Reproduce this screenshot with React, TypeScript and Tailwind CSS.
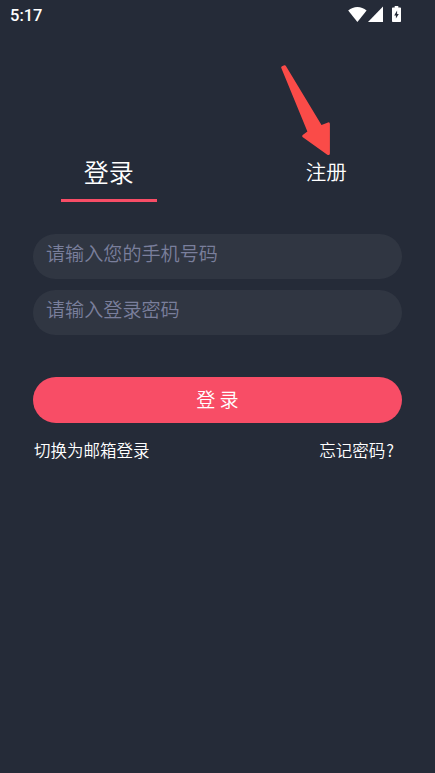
import type { ReactNode } from "react";
import { clsx } from "clsx";

interface TabProps {
  label: string;
  active?: boolean;
}

interface FieldProps {
  type: string;
  placeholder: string;
}

{/** Signal, wifi and battery glyphs on the right side of the status bar. */}
const StatusIcons = () => (
  <div className="flex h-[18px] items-start">
    <svg width="19" height="16" viewBox="0 0 19 16" fill="#fff">
      <path d="M9.4 15.9 0.2 4.5C2.9 2.1 6 0.9 9.4 0.9s6.5 1.2 9.2 3.6z" />
    </svg>
    <svg className="ml-px" width="15" height="16" viewBox="0 0 15 16" fill="#fff">
      <path d="M15 0.6V16H0z" />
    </svg>
    <svg className="ml-[9px]" width="9" height="16" viewBox="0 0 9 16">
      <path fill="#fff" d="M2.7 0h3.6v1.5H8.2q.8 0 .8.8V15.2q0 .8-.8.8H.8Q0 16 0 15.2V2.3q0-.8.8-.8h1.9z" />
      <path fill="#252b38" d="M5.1 4.6v3.5h1.7L3.9 12.6V9.5H2.2z" />
    </svg>
  </div>
);

{/** Pointer drawn over the page, aimed at the register tab. */}
const Arrow = () => (
  <svg className="absolute left-[270px] top-[55px]" width="70" height="105" viewBox="0 0 70 105">
    <path
      fill="#fa4b48"
      d="M11.2 12.8Q10.9 11.7 12 11.2L14.3 10.2Q15.4 9.9 15.9 10.9L51.5 69.9 58 67.4Q59.9 67 59.9 68.9V98.4Q59.7 100.8 57.3 99.8L32.5 81.9Q31.7 80.8 32.7 79.9L37.4 76.6z"
    />
  </svg>
);

const Tab = ({ label, active }: TabProps) => (
  <div className="flex flex-1 flex-col items-center">
    <button
      className={clsx(
        "flex h-9 items-center leading-none",
        active ? "text-[25px]" : "text-[20.5px]"
      )}
    >
      {label}
    </button>
    {active && <div className="mt-[10px] h-[3px] w-24 bg-[#f84d66]" />}
  </div>
);

const Field = ({ type, placeholder }: FieldProps) => (
  <input
    type={type}
    placeholder={placeholder}
    className="block h-[45.5px] w-full rounded-full bg-[#303642] px-[13px] pb-[6px] text-[19.1px] text-white outline-none placeholder:text-[#7a7f9c]"
  />
);

const TextLink = ({ children }: { children: ReactNode }) => (
  <button className="text-[16.5px] leading-6">{children}</button>
);

export default function App() {
  return (
    <main className="relative h-screen overflow-hidden bg-[#252b38] font-['Noto_Sans_CJK_SC',sans-serif] font-[350] text-white">

      {/** Status bar */}
      <header className="flex h-[30px] items-start justify-between pl-[10px] pr-[34px] pt-[6px]">
        <span className="font-[Roboto,sans-serif] text-[16.5px] font-medium leading-[19px]">5:17</span>
        <StatusIcons />
      </header>

      {/** Login / register switch */}
      <nav className="mt-[123px] flex h-[49px]">
        <Tab label="登录" active />
        <Tab label="注册" />
      </nav>

      {/** Login form */}
      <form className="mx-[33px] mt-[31.5px]">
        <div className="flex flex-col gap-[10.5px]">
          <Field type="text" placeholder="请输入您的手机号码" />
          <Field type="text" placeholder="请输入登录密码" />
        </div>
        <button
          type="button"
          className="mt-[42px] block h-[46px] w-full rounded-full bg-[#f84d66] pb-[2px] text-[19.1px] leading-[44px]"
        >
          登 录
        </button>
      </form>

      <div className="ml-[34px] mr-[41px] mt-[15px] flex justify-between">
        <TextLink>切换为邮箱登录</TextLink>
        <TextLink>忘记密码<span className="ml-px">?</span></TextLink>
      </div>

      <Arrow />
    </main>
  );
}
